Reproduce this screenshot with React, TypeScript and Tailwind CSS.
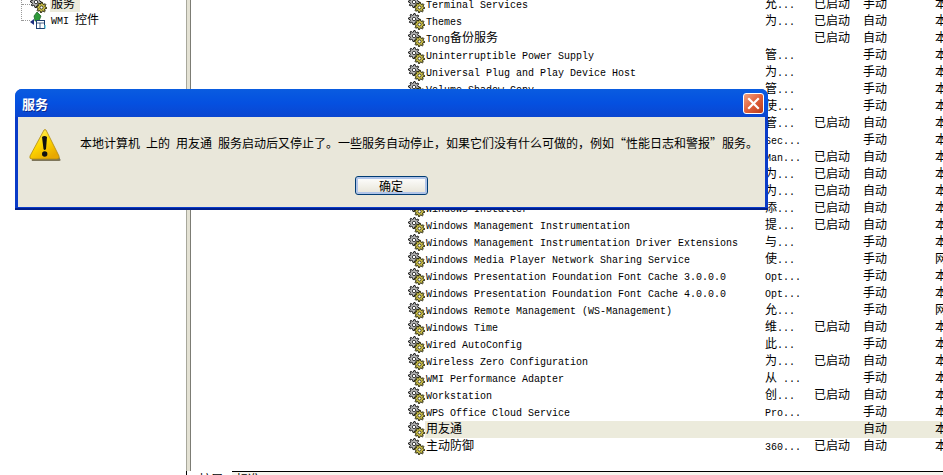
import React from "react";

function T({ text }: { text: string }) {
  const parts = text.split(/([\u2E80-\uFFFF]+)/).filter(Boolean);
  return (
    <>
      {parts.map((p, i) =>
        /[\u2E80-\uFFFF]/.test(p) ? (
          <span key={i} className="font-['Noto_Sans_CJK_SC',sans-serif] text-[12px]">{p}</span>
        ) : (
          <span key={i} className="font-['Liberation_Mono',monospace] text-[10px] whitespace-pre">{p}</span>
        )
      )}
    </>
  );
}

function Gear({ cx, cy, r, fill, stroke }: { cx: number; cy: number; r: number; fill: string; stroke: string }) {
  const teeth = 8;
  const pts: string[] = [];
  for (let i = 0; i < teeth * 4; i++) {
    const a = (i / (teeth * 4)) * Math.PI * 2;
    const rad = i % 4 < 2 ? r : r * 0.7;
    pts.push(`${(cx + Math.cos(a) * rad).toFixed(2)},${(cy + Math.sin(a) * rad).toFixed(2)}`);
  }
  return (
    <g>
      <polygon points={pts.join(" ")} fill={fill} stroke={stroke} strokeWidth="1" />
      <circle cx={cx} cy={cy} r={r * 0.3} fill="#ffffff" stroke={stroke} strokeWidth="0.8" />
    </g>
  );
}

function GearIcon() {
  return (
    <svg width="17" height="17" viewBox="0 0 17 17" className="shrink-0">
      <Gear cx={6} cy={6} r={5.6} fill="#b4b4b4" stroke="#1c1c1c" />
      <Gear cx={11.5} cy={11.5} r={5.2} fill="#cfc24a" stroke="#1e1e08" />
    </svg>
  );
}

function WmiIcon() {
  return (
    <svg width="17" height="17" viewBox="0 0 17 17" className="shrink-0">
      <path d="M7 0 L11 4 L9 9 L5 9 L4 4 Z" fill="#2e9a3a" stroke="#145c1e" strokeWidth="0.7" />
      <path d="M0 10 L4 7 L4 13 Z" fill="#1c2f80" />
      <rect x="6.5" y="8.5" width="8" height="8" fill="#ffffff" stroke="#1d3f70" strokeWidth="1" />
      <path d="M6.5 11 H14.5 M10 11 V16.5" stroke="#1d3f70" strokeWidth="0.8" />
      <rect x="14.5" y="13" width="1.5" height="3.5" fill="#7fe0f0" />
    </svg>
  );
}

type Row = [string, string, string, string, string];

const rows: Row[] = [
  ["Terminal Services", "允...", "已启动", "手动", "本"],
  ["Themes", "为...", "已启动", "自动", "本"],
  ["Tong备份服务", "", "已启动", "自动", "本"],
  ["Uninterruptible Power Supply", "管...", "", "手动", "本"],
  ["Universal Plug and Play Device Host", "为...", "", "手动", "本"],
  ["Volume Shadow Copy", "管...", "", "手动", "本"],
  ["WebClient", "使...", "", "手动", "本"],
  ["Windows Audio", "管...", "已启动", "自动", "本"],
  ["Windows CardSpace", "Sec...", "", "手动", "本"],
  ["Windows Driver Foundation", "Man...", "已启动", "自动", "本"],
  ["Windows Firewall", "为...", "已启动", "自动", "本"],
  ["Windows Image Acquisition", "为...", "已启动", "自动", "本"],
  ["Windows Installer", "添...", "已启动", "自动", "本"],
  ["Windows Management Instrumentation", "提...", "已启动", "自动", "本"],
  ["Windows Management Instrumentation Driver Extensions", "与...", "", "手动", "本"],
  ["Windows Media Player Network Sharing Service", "使...", "", "手动", "网"],
  ["Windows Presentation Foundation Font Cache 3.0.0.0", "Opt...", "", "手动", "本"],
  ["Windows Presentation Foundation Font Cache 4.0.0.0", "Opt...", "", "手动", "本"],
  ["Windows Remote Management (WS-Management)", "允...", "", "手动", "网"],
  ["Windows Time", "维...", "已启动", "自动", "本"],
  ["Wired AutoConfig", "此...", "", "手动", "本"],
  ["Wireless Zero Configuration", "为...", "已启动", "自动", "本"],
  ["WMI Performance Adapter", "从 ...", "", "手动", "本"],
  ["Workstation", "创...", "已启动", "自动", "本"],
  ["WPS Office Cloud Service", "Pro...", "", "手动", "本"],
  ["用友通", "", "", "自动", "本"],
  ["主动防御", "360...", "已启动", "自动", "本"],
];

function ServiceRow({ row, selected }: { row: Row; selected: boolean }) {
  const [name, desc, status, start, logon] = row;
  return (
    <div className="flex h-[17px] items-start text-[12px] leading-[13px] text-black">
      <GearIcon />
      <div className={`flex h-[17px] flex-1 items-start ${selected ? "bg-[#ecebdc]" : ""}`}>
        <div className="h-[17px] w-[340px] overflow-hidden whitespace-nowrap pl-px"><T text={name} /></div>
        <div className="h-[17px] w-[49px] whitespace-nowrap"><T text={desc} /></div>
        <div className="h-[17px] w-[49px] whitespace-nowrap"><T text={status} /></div>
        <div className="h-[17px] w-[72px] whitespace-nowrap"><T text={start} /></div>
        <div className="h-[17px] whitespace-nowrap"><T text={logon} /></div>
      </div>
    </div>
  );
}

function WarningIcon() {
  return (
    <svg width="33" height="33" viewBox="0 0 33 33" className="shrink-0">
      <defs>
        <linearGradient id="warn" x1="0" y1="0" x2="0.6" y2="1">
          <stop offset="0" stopColor="#fff27a" />
          <stop offset="0.55" stopColor="#ffd800" />
          <stop offset="1" stopColor="#e8a800" />
        </linearGradient>
      </defs>
      <path d="M16 3 L31.5 30.5 Q32 32 30 32 L4 32 Q2 32 3 30 Z" fill="#5a5030" opacity="0.75" />
      <path d="M15 1 Q16 0 17 1 L30 27 Q31 30 28 30 L3 30 Q0 30 1 27 Z" fill="url(#warn)" stroke="#b08a10" strokeWidth="0.8" />
      <path d="M13 8 Q15.5 6 18 8 L17 20 Q15.5 22 14.5 20 Z" fill="#111111" />
      <circle cx="15.7" cy="25" r="2.7" fill="#111111" />
    </svg>
  );
}

export default function App() {
  return (
    <div className="relative flex h-[475px] w-[943px] flex-col overflow-hidden bg-white font-['Noto_Sans_CJK_SC',sans-serif]">
      <div className="flex h-[471px] shrink-0">
        {/* tree */}
        <div className="w-[186px] shrink-0 overflow-hidden">
          <div className="-mt-[4px] ml-[21px] h-[25px] border-l border-dotted border-[#9a9a9a]">
            <div className="flex h-[16px] items-center">
              <div className="w-[8px] border-t border-dotted border-[#9a9a9a]" />
              <GearIcon />
              <div className="ml-[3px] h-[16px] w-[30px] bg-[#ecebdc] pl-[1px] text-[12px] leading-[14px]"><T text="服务" /></div>
            </div>
            <div className="flex h-[16px] items-center">
              <div className="w-[8px] border-t border-dotted border-[#9a9a9a]" />
              <WmiIcon />
              <div className="ml-[4px] h-[16px] whitespace-nowrap text-[12px] leading-[14px]"><T text="WMI 控件" /></div>
            </div>
          </div>
        </div>
        {/* splitter */}
        <div className="flex w-[5px] shrink-0">
          <div className="w-px bg-[#a8a89c]" />
          <div className="w-[3px] bg-[#e4e2d4]" />
          <div className="w-px bg-[#7c7c74]" />
        </div>
        {/* list */}
        <div className="min-w-0 flex-1 overflow-hidden pl-[217px]">
          <div className="-mt-[4px]">
            {rows.map((r, i) => (
              <ServiceRow key={i} row={r} selected={i === 25} />
            ))}
          </div>
        </div>
      </div>

      {/* tabs */}
      <div className="flex h-[4px] shrink-0 overflow-hidden pl-[186px]">
        <div className="w-[46px] border-l border-black pl-[12px] pt-[2px] text-[12px] leading-none text-black">扩展</div>
        <div className="flex-1 border-t border-black bg-[#f6f5ee] pl-[4px] pt-px text-[12px] leading-none text-black">标准</div>
      </div>

      {/* dialog */}
      <div className="absolute left-[15px] top-[89px] flex h-[121px] w-[753px] flex-col overflow-hidden rounded-t-[7px] bg-[#0a3bc8] shadow-[inset_0_-2px_0_#001f8c]">
        <div className="flex h-[28px] shrink-0 items-center justify-between bg-gradient-to-b from-[#0a5ce0] via-[#0550e0] to-[#0a46d0] pl-[7px] pr-[4px]">
          <span className="text-[13px] font-bold leading-none text-white [text-shadow:1px_1px_0_#0a2a90]">服务</span>
          <div className="flex h-[21px] w-[21px] items-center justify-center rounded-[3px] border border-white bg-gradient-to-br from-[#f0a080] via-[#e0603a] to-[#b83a18]">
            <svg width="13" height="13" viewBox="0 0 13 13">
              <path d="M2 2 L11 11 M11 2 L2 11" stroke="#ffffff" strokeWidth="2.2" strokeLinecap="square" />
            </svg>
          </div>
        </div>
        <div className="mx-[3px] mb-[3px] flex flex-1 flex-col bg-[#e9e7da]">
          <div className="flex items-start pl-[11px] pt-[12px]">
            <WarningIcon />
            <div className="ml-[18px] mt-[5px] whitespace-nowrap text-[12px] leading-[18px] text-black">
              {"本地计算机\u2002上的\u2002用友通\u2002服务启动后又停止了。一些服务自动停止，如果它们没有什么可做的，例如“性能日志和警报”服务。"}
            </div>
          </div>
          <div className="flex justify-center pr-[1px] pt-[14px]">
            <div className="flex h-[19px] w-[73px] items-center justify-center rounded-[3px] border border-[#003c74] bg-gradient-to-b from-white to-[#e6e3d6] text-[12px] leading-none text-black shadow-[inset_0_0_0_2px_#b0c4e8]">
              确定
            </div>
          </div>
        </div>
      </div>
    </div>
  );
}
